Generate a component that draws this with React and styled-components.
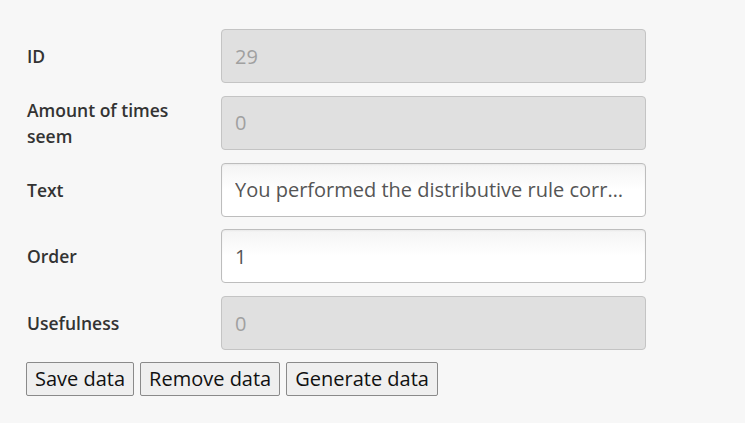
import React from "react";
import styled, { createGlobalStyle } from "styled-components";

// --- ESTILOS ---
const GlobalStyle = createGlobalStyle`
  html, body {
    margin: 0;
    background: #f7f7f7;
  }
  body {
    font-family: "Open Sans", "Noto Sans", sans-serif;
    color: #333;
  }
`;

const Page = styled.div`
  padding: 29px 0 0 26px;
  width: 620px;
`;

const Form = styled.form`
  display: flex;
  flex-direction: column;
  gap: 12.75px;
`;

const Row = styled.div`
  display: grid;
  grid-template-columns: 175px 425px;
  column-gap: 20px;
  align-items: center;
`;

const Label = styled.label`
  padding-left: 1px;
  font-size: 17.5px;
  font-weight: 600;
  line-height: 26px;
  color: #333;
`;

const Input = styled.input`
  box-sizing: border-box;
  width: 100%;
  height: 54px;
  margin: 0;
  padding: 0 13px;
  font-family: "Open Sans", "Noto Sans", sans-serif;
  font-size: 20px;
  color: #555;
  border: 1px solid #bdbdbd;
  border-radius: 4px;
  background: linear-gradient(#f4f4f4, #ffffff 50%);
  box-shadow: inset 0 1px 2px rgba(0, 0, 0, 0.05);
  text-overflow: ellipsis;
  outline: none;

  &:disabled {
    background: #e0e0e0;
    color: #a0a0a0;
    border-color: #c4c4c4;
    box-shadow: none;
  }
`;

const Actions = styled.div`
  display: flex;
  gap: 6px;
  margin-top: -1px;
`;

const Button = styled.button`
  height: 34px;
  margin: 0;
  padding: 0 8px;
  font-family: "Open Sans", "Noto Sans", sans-serif;
  font-size: 20px;
  color: #111;
  background: #efefef;
  border: 1px solid #8a8a8a;
  border-radius: 2px;
`;

const fields = [
  { id: "id", label: "ID", value: "29", disabled: true },
  { id: "seen", label: "Amount of times seem", value: "0", disabled: true },
  {
    id: "text",
    label: "Text",
    value:
      "You performed the distributive rule correctly, now simplify the expression",
  },
  { id: "order", label: "Order", value: "1" },
  { id: "usefulness", label: "Usefulness", value: "0", disabled: true },
];

// --- COMPONENTE ---
export default function App() {
  return (
    <>
      <GlobalStyle />
      <Page>
        <Form onSubmit={(e) => e.preventDefault()}>
          {fields.map((f) => (
            <Row key={f.id}>
              <Label htmlFor={f.id}>{f.label}</Label>
              <Input
                id={f.id}
                defaultValue={f.value}
                disabled={f.disabled}
              />
            </Row>
          ))}
          <Actions>
            <Button type="button">Save data</Button>
            <Button type="button">Remove data</Button>
            <Button type="button">Generate data</Button>
          </Actions>
        </Form>
      </Page>
    </>
  );
}
